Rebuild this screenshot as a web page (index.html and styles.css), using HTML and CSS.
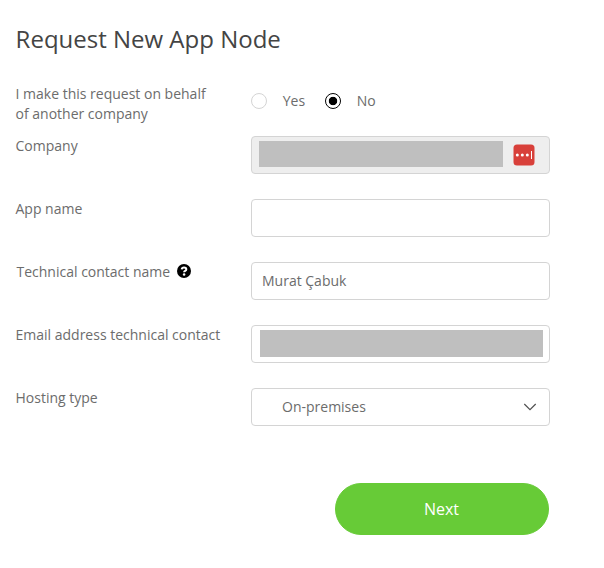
FILE: index.html
```html
<!DOCTYPE html>
<html lang="en">
<head>
<meta charset="utf-8">
<title>Request New App Node</title>
<link rel="stylesheet" href="styles.css">
</head>
<body>
<form class="form">
  <h1 class="title">Request New App Node</h1>
  <div class="row row-radio">
    <span class="label">I make this request on behalf<br>of another company</span>
    <div class="radios">
      <span class="radio"></span><span class="opt">Yes</span>
      <span class="radio checked"></span><span class="opt">No</span>
    </div>
  </div>
  <div class="row">
    <span class="label">Company</span>
    <div class="field disabled">
      <span class="mask mask-company"></span>
      <svg class="pass" width="22" height="22" viewBox="0 0 22 22"><rect x="0.5" y="0.5" width="21" height="21" rx="3.500" fill="#d8403a"/><g fill="#fff"><circle cx="4.300" cy="11" r="1.500"/><circle cx="9.300" cy="11" r="1.500"/><circle cx="14.300" cy="11" r="1.500"/><rect x="18" y="7" width="1" height="8"/></g></svg>
    </div>
  </div>
  <div class="row">
    <span class="label">App name</span>
    <div class="field"></div>
  </div>
  <div class="row">
    <span class="label label-tip">Technical contact name
      <svg class="help" width="14" height="14" viewBox="0 0 14 14"><circle cx="7" cy="7" r="7" fill="#000"/><path d="M4.700 5.400C4.900 4.100 5.800 3.600 7 3.600c1.400 0 2.300.7 2.300 1.800 0 1.600-2.200 1.400-2.200 2.900" fill="none" stroke="#fff" stroke-width="2"/><circle cx="7.100" cy="10.500" r="1.250" fill="#fff"/></svg>
    </span>
    <div class="field">Murat Çabuk</div>
  </div>
  <div class="row">
    <span class="label">Email address technical contact</span>
    <div class="field"><span class="mask mask-email"></span></div>
  </div>
  <div class="row">
    <span class="label">Hosting type</span>
    <div class="field select">On-premises
      <svg class="chevron" width="14" height="8" viewBox="0 0 14 8"><path d="M1.300 1l5.700 5.700L12.700 1" fill="none" stroke="#505050" stroke-width="1.200"/></svg>
    </div>
  </div>
  <button class="next" type="button">Next</button>
</form>
</body>
</html>
```
FILE: styles.css
```css
* { box-sizing: border-box; }
body { margin: 0; background: #fff; font-family: "Open Sans", sans-serif; font-size: 14px; line-height: 20px; color: #6c6c6c; }
.form { width: 550px; padding: 22px 0 0 15px; display: flex; flex-direction: column; }
.title { margin: 0 0 28px; padding-left: 0.600px; font-size: 24px; line-height: 34px; font-weight: 400; color: #444; }
.row { display: grid; grid-template-columns: 236px 299px; height: 38px; margin-bottom: 25px; }
.row-radio { height: 40px; margin-bottom: 12px; }
.label { padding-left: 0.500px; }
.label-tip { display: flex; padding-left: 1.500px; gap: 6.500px; }
.help { margin-top: 2px; }
.radios { display: flex; align-items: center; height: 34px; }
.radio { width: 16px; height: 16px; border: 1px solid #d4d4d4; border-radius: 50%; }
.radio.checked { border-color: #000; background: radial-gradient(circle, #000 3.800px, #fff 4.600px); }
.opt { margin: 0 20px 0 15.700px; }
.field { display: flex; align-items: center; border: 1px solid #d4d4d4; border-radius: 4px; padding: 0 10px; background: #fff; }
.disabled { background: #eee; padding: 0 7px; }
.mask { flex: none; background: #bfbfbf; }
.mask-company { width: 244px; height: 26px; margin-top: -2px; }
.pass { margin-left: 10px; }
.mask-email { width: 283px; height: 27px; margin: -1px 0 0 -2px; }
.select { padding: 0 12px 0 30px; justify-content: space-between; }
.chevron { margin-top: -1px; }
.next { width: 214px; height: 52px; margin: 32px 1px 0 0; padding: 0 1px 0 0; align-self: flex-end; border: 1px solid #67cb37; border-radius: 26px; background: #67cb37; color: #fff; font: 16px "Open Sans", sans-serif; }
```
